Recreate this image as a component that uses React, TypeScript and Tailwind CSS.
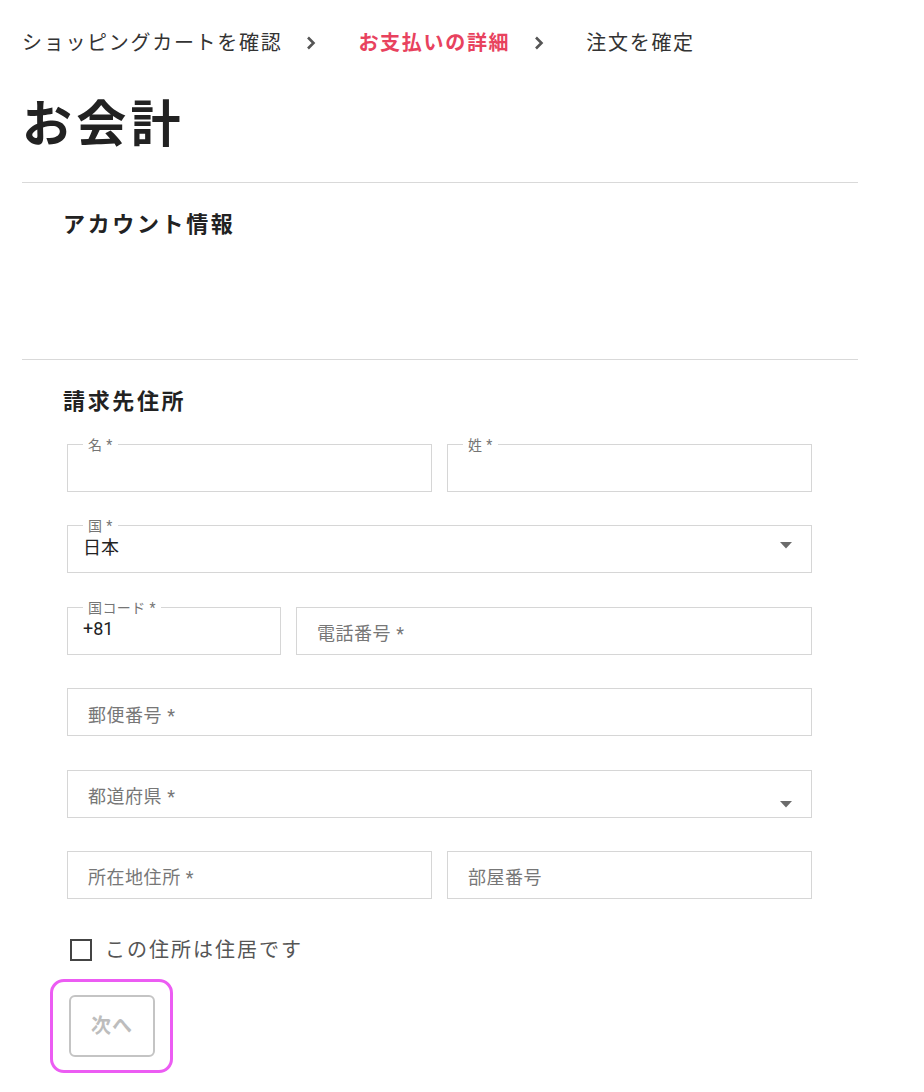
const font = "font-['Roboto','Noto_Sans_CJK_JP',sans-serif]";

function Chevron() {
  return (
    <svg width="10" height="14" viewBox="0 0 10 14" className="mx-[24px] mr-[42px] shrink-0">
      <path d="M2 1.5 L7.5 7 L2 12.5" fill="none" stroke="#555" strokeWidth="2.6" />
    </svg>
  );
}

function Arrow({ className }: { className: string }) {
  return (
    <svg width="12" height="7" viewBox="0 0 12 7" className={"absolute right-[19px] " + className}>
      <path d="M0 0 H12 L6 6.5 Z" fill="#6b6b6b" />
    </svg>
  );
}

function Field({
  label,
  value,
  placeholder,
  className = "",
  arrow,
}: {
  label?: string;
  value?: string;
  placeholder?: string;
  className?: string;
  arrow?: "mid" | "low";
}) {
  return (
    <div className={"relative h-[48px] border border-[#d6d6d6] " + className}>
      {label && (
        <span className="absolute left-[15px] top-0 -translate-y-1/2 bg-white px-[5px] text-[14px] leading-[16px] tracking-[0.03em] text-[#757575]">
          {label}
        </span>
      )}
      {value && (
        <div className="flex h-full items-center pl-[15px] pb-[4px] text-[18px] text-[#222]">{value}</div>
      )}
      {placeholder && (
        <div className="flex h-full items-center pl-[20px] pt-[6px] text-[18px] tracking-[0.03em] text-[#777]">
          {placeholder}
        </div>
      )}
      {arrow === "mid" && <Arrow className="top-[16px]" />}
      {arrow === "low" && <Arrow className="top-[30px]" />}
    </div>
  );
}

export default function App() {
  return (
    <div className={"w-[858px] bg-white pl-[22px] pb-[19px] " + font}>
      <nav className="flex items-center pt-[29px] text-[20px] leading-[28px] tracking-[0.085em] text-[#333]">
        <span>ショッピングカートを確認</span>
        <Chevron />
        <span className="font-bold text-[#e8425e]">お支払いの詳細</span>
        <Chevron />
        <span>注文を確定</span>
      </nav>

      <h1 className="mt-[38px] text-[50px] font-bold leading-[60px] tracking-[0.085em] text-[#222]">お会計</h1>

      <section className="mt-[27px] border-t border-[#d9d9d9] px-[41px] pt-[26px] pb-[118px]">
        <h2 className="text-[22px] font-bold leading-[32px] tracking-[0.12em] text-[#222]">アカウント情報</h2>
      </section>

      <section className="border-t border-[#d9d9d9] pt-[26px]">
        <h2 className="pl-[41px] text-[22px] font-bold leading-[32px] tracking-[0.12em] text-[#222]">請求先住所</h2>

        <div className="mt-[26px] flex w-[790px] flex-col gap-[33.4px] pl-[45px]">
          <div className="grid grid-cols-2 gap-[15px]">
            <Field label="名 *" />
            <Field label="姓 *" />
          </div>
          <Field label="国 *" value="日本" arrow="mid" />
          <div className="flex gap-[15px]">
            <Field label="国コード *" value="+81" className="w-[214px] shrink-0" />
            <Field placeholder="電話番号 *" className="flex-1" />
          </div>
          <Field placeholder="郵便番号 *" />
          <Field placeholder="都道府県 *" arrow="low" />
          <div className="grid grid-cols-2 gap-[15px]">
            <Field placeholder="所在地住所 *" />
            <Field placeholder="部屋番号" />
          </div>
        </div>

        <label className="mt-[36px] ml-[48px] flex items-center gap-[13px] leading-[30px]">
          <span className="h-[22px] w-[22px] border-2 border-[#444]" />
          <span className="text-[20px] tracking-[0.1em] text-[#555]">この住所は住居です</span>
        </label>

        <div className="mt-[14px] ml-[28px] inline-block rounded-[14px] border-[3px] border-[#ec5cf3] py-[13px] pl-[16px] pr-[15px]">
          <button className="flex h-[62px] w-[86px] items-center justify-center rounded-[6px] border-2 border-[#c4c4c4] text-[20px] font-bold tracking-[0.05em] text-[#bdbdbd]">
            次へ
          </button>
        </div>
      </section>
    </div>
  );
}
